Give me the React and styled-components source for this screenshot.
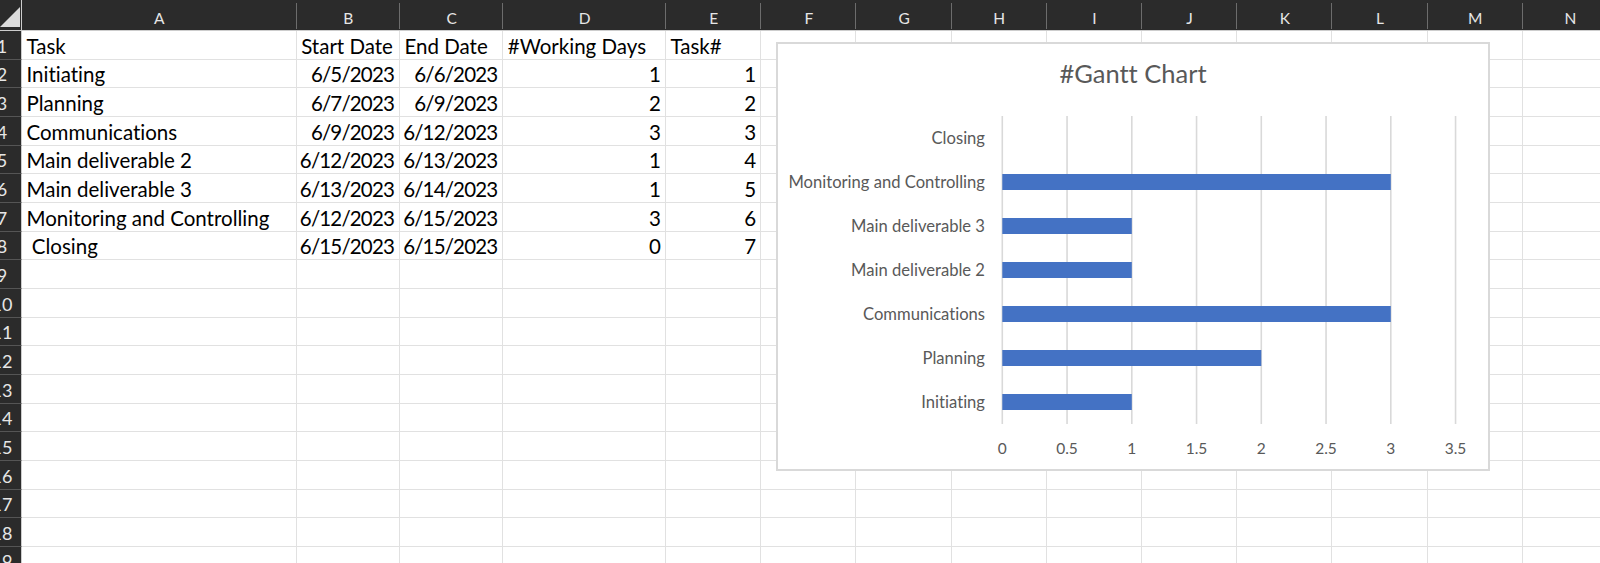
import React from "react";
import styled, { createGlobalStyle } from "styled-components";

const GlobalStyle = createGlobalStyle`
  html, body { margin: 0; padding: 0; background: #ffffff; }
  body {
    overflow: hidden;
    font-family: Lato, "Open Sans", sans-serif;
    font-variant-ligatures: none;
    font-feature-settings: "liga" 0, "clig" 0;
  }
`;

const COLS = [
  { key: "A", w: 274.7 },
  { key: "B", w: 103.3 },
  { key: "C", w: 103.3 },
  { key: "D", w: 162.7 },
  { key: "E", w: 95.3 },
  { key: "F", w: 95.2 },
  { key: "G", w: 95.2 },
  { key: "H", w: 95.2 },
  { key: "I", w: 95.2 },
  { key: "J", w: 95.2 },
  { key: "K", w: 95.2 },
  { key: "L", w: 95.2 },
  { key: "M", w: 95.2 },
  { key: "N", w: 95.2 },
];

const DATA = [
  [["Task", "l"], ["Start Date", "l"], ["End Date", "l"], ["#Working Days", "l"], ["Task#", "l"]],
  [["Initiating", "l"], ["6/5/2023", "r"], ["6/6/2023", "r"], ["1", "r"], ["1", "r"]],
  [["Planning", "l"], ["6/7/2023", "r"], ["6/9/2023", "r"], ["2", "r"], ["2", "r"]],
  [["Communications", "l"], ["6/9/2023", "r"], ["6/12/2023", "r"], ["3", "r"], ["3", "r"]],
  [["Main deliverable 2", "l"], ["6/12/2023", "r"], ["6/13/2023", "r"], ["1", "r"], ["4", "r"]],
  [["Main deliverable 3", "l"], ["6/13/2023", "r"], ["6/14/2023", "r"], ["1", "r"], ["5", "r"]],
  [["Monitoring and Controlling", "l"], ["6/12/2023", "r"], ["6/15/2023", "r"], ["3", "r"], ["6", "r"]],
  [["\u00a0Closing", "l"], ["6/15/2023", "r"], ["6/15/2023", "r"], ["0", "r"], ["7", "r"]],
];

const ROW_COUNT = 19;
const ROW_H = 28.67;

const Sheet = styled.div`
  position: relative;
  width: 1600px;
  height: 563px;
  overflow: hidden;
  background: #ffffff;
`;

const HeaderRow = styled.div`
  display: flex;
  height: 31px;
  box-sizing: border-box;
  background: #2b2b2b;
  border-bottom: 1px solid #cdcdcd;
`;

const Corner = styled.div`
  width: 22px;
  flex: none;
  box-sizing: border-box;
  border-right: 1px solid #cdcdcd;
  display: flex;
  align-items: flex-end;
  justify-content: flex-end;
  padding: 0 1px 3px 0;
`;

const ColHeader = styled.div`
  flex: none;
  width: ${(p) => p.$w}px;
  box-sizing: border-box;
  display: flex;
  align-items: flex-end;
  justify-content: center;
  padding-bottom: 4px;
  color: #e6e6e6;
  font-family: Lato, "Open Sans", sans-serif;
  font-size: 15.5px;
  line-height: 15px;
  position: relative;
  &::after {
    content: "";
    position: absolute;
    right: 0;
    top: 3px;
    bottom: 1px;
    width: 1px;
    background: #6c6c6c;
  }
`;

const Row = styled.div`
  display: flex;
  height: ${ROW_H}px;
`;

const RowHeader = styled.div`
  width: 22px;
  flex: none;
  box-sizing: border-box;
  background: #2b2b2b;
  border-right: 1px solid #cdcdcd;
  border-bottom: 1px solid #555555;
  overflow: hidden;
  display: flex;
  align-items: flex-end;
  padding-bottom: 4px;
`;

const RowNum = styled.span`
  flex: none;
  width: 34px;
  margin-left: -15px;
  text-align: center;
  color: #e6e6e6;
  font-family: Lato, "Open Sans", sans-serif;
  font-size: 18px;
  line-height: 18px;
`;

const Cell = styled.div`
  flex: none;
  width: ${(p) => p.$w}px;
  box-sizing: border-box;
  border-right: 1px solid #e1e1e1;
  border-bottom: 1px solid #e1e1e1;
  display: flex;
  align-items: flex-end;
  justify-content: ${(p) => (p.$align === "r" ? "flex-end" : "flex-start")};
  padding: 0 5px 3px 4.5px;
  font-family: Lato, "Open Sans", sans-serif;
  font-size: 20.5px;
  line-height: 20px;
  letter-spacing: ${(p) => (p.$align === "r" ? "-0.85px" : "0")};
  color: #000000;
  white-space: nowrap;
  overflow: visible;
`;

const ChartFrame = styled.div`
  position: absolute;
  left: 776px;
  top: 42px;
  width: 714px;
  height: 429px;
  box-sizing: border-box;
  border: 2px solid #d9d9d9;
  background: #ffffff;
  display: flex;
  flex-direction: column;
`;

const ChartTitle = styled.div`
  height: 60px;
  box-sizing: border-box;
  padding-top: 16px;
  text-align: center;
  font-family: Lato, "Open Sans", sans-serif;
  font-size: 25.5px;
  line-height: 26px;
  color: #595959;
`;

const PlotSvg = styled.svg`
  display: block;
  font-family: Lato, "Open Sans", sans-serif;
`;

const CATS = [
  ["Closing", 0],
  ["Monitoring and Controlling", 3],
  ["Main deliverable 3", 1],
  ["Main deliverable 2", 1],
  ["Communications", 3],
  ["Planning", 2],
  ["Initiating", 1],
];

const X0 = 1002.3;
const UNIT = 129.5;
const TOP = 116;
const BOTTOM = 424;
const CAT_H = 44;

function Chart() {
  const ticks = [0, 0.5, 1, 1.5, 2, 2.5, 3, 3.5];
  return (
    <ChartFrame>
      <ChartTitle>#Gantt Chart</ChartTitle>
      <PlotSvg width="710" height="365" viewBox="778 104 710 365">
        {ticks.map((t) => (
          <line
            key={"g" + t}
            x1={X0 + t * UNIT}
            x2={X0 + t * UNIT}
            y1={TOP}
            y2={BOTTOM}
            stroke="#d9d9d9"
            strokeWidth="1.6"
          />
        ))}
        {CATS.map(([name, v], i) => {
          const cy = TOP + CAT_H / 2 + i * CAT_H;
          return (
            <g key={name}>
              {v > 0 && (
                <rect x={X0} y={cy - 8} width={v * UNIT} height="16" fill="#4472c4" />
              )}
              <text x="985" y={cy + 5.5} textAnchor="end" fontSize="16.6" fill="#595959">
                {name}
              </text>
            </g>
          );
        })}
        {ticks.map((t) => (
          <text
            key={"t" + t}
            x={X0 + t * UNIT}
            y="453.5"
            textAnchor="middle"
            fontSize="15.5"
            fill="#595959"
          >
            {t}
          </text>
        ))}
      </PlotSvg>
    </ChartFrame>
  );
}

export default function App() {
  const rows = Array.from({ length: ROW_COUNT }, (_, i) => i);
  return (
    <>
      <GlobalStyle />
      <Sheet>
        <HeaderRow>
          <Corner>
            <svg width="20" height="20" viewBox="0 0 20 20">
              <polygon points="0,20 20,20 20,0" fill="#dcdcdc" />
            </svg>
          </Corner>
          {COLS.map((c) => (
            <ColHeader key={c.key} $w={c.w}>
              {c.key}
            </ColHeader>
          ))}
        </HeaderRow>
        {rows.map((r) => {
          const data = DATA[r] || [];
          return (
            <Row key={r}>
              <RowHeader>
                <RowNum>{r + 1}</RowNum>
              </RowHeader>
              {COLS.map((c, ci) => {
                const d = data[ci];
                return (
                  <Cell key={c.key} $w={c.w} $align={d ? d[1] : "l"}>
                    {d ? d[0] : ""}
                  </Cell>
                );
              })}
            </Row>
          );
        })}
        <Chart />
      </Sheet>
    </>
  );
}
